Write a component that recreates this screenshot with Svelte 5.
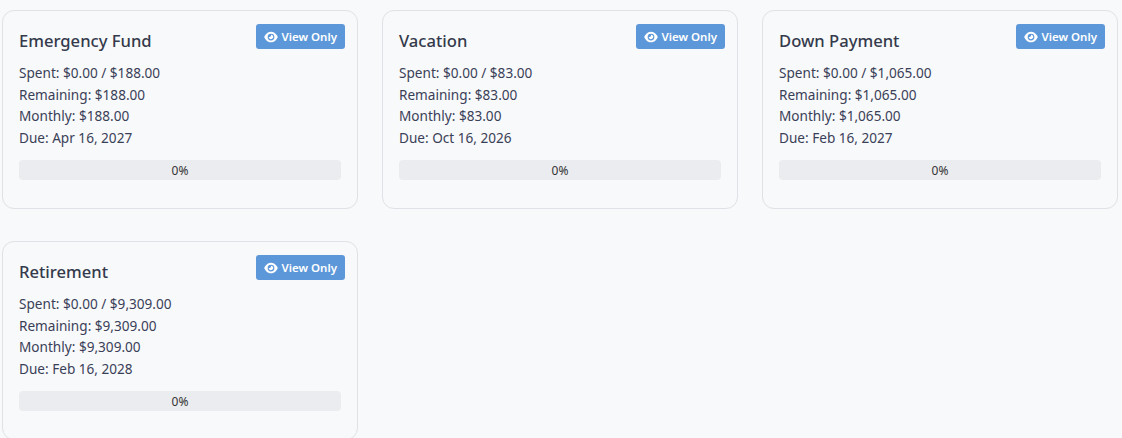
<script>
	const goals = [
		{ name: 'Emergency Fund', spent: '$0.00', total: '$188.00', remaining: '$188.00', monthly: '$188.00', due: 'Apr 16, 2027' },
		{ name: 'Vacation', spent: '$0.00', total: '$83.00', remaining: '$83.00', monthly: '$83.00', due: 'Oct 16, 2026' },
		{ name: 'Down Payment', spent: '$0.00', total: '$1,065.00', remaining: '$1,065.00', monthly: '$1,065.00', due: 'Feb 16, 2027' },
		{ name: 'Retirement', spent: '$0.00', total: '$9,309.00', remaining: '$9,309.00', monthly: '$9,309.00', due: 'Feb 16, 2028' }
	];
</script>

<div class="page">
	<div class="grid">
		{#each goals as goal}
			<div class="card">
				<div class="card__head">
					<h5>{goal.name}</h5>
					<span class="badge">
						<svg width="14" height="12" viewBox="0 0 576 512" aria-hidden="true">
							<path fill="currentColor" d="M288 32c-81 0-146 37-193 81C48 157 17 209 2 245c-3 8-3 17 0 25 15 36 46 88 93 132 47 44 112 78 193 78s146-34 193-78c47-44 78-96 93-132 3-8 3-17 0-25-15-36-46-88-93-132C434 69 369 32 288 32zM144 256a144 144 0 1 1 288 0 144 144 0 1 1-288 0zm144-64c0 35-29 64-64 64-7 0-14-1-20-3-6-2-12 2-12 8 0 5 1 11 3 17 14 51 67 82 118 68s82-67 68-118c-11-42-48-70-89-72-6 0-9 6-7 11 2 8 3 17 3 25z" />
						</svg>
						View Only
					</span>
				</div>
				<p>Spent: {goal.spent} / {goal.total}</p>
				<p>Remaining: {goal.remaining}</p>
				<p>Monthly: {goal.monthly}</p>
				<p>Due: {goal.due}</p>
				<div class="progress">0%</div>
			</div>
		{/each}
	</div>
</div>

<style>
	:global(body) {
		margin: 0;
		background: #f8f9fa;
	}

	.page {
		height: 438px;
		overflow: hidden;
		padding: 10px 4px 0 2px;
		box-sizing: border-box;
		font-family: 'Noto Sans', 'Open Sans', sans-serif;
		color: #3a3f58;
	}

	.grid {
		display: grid;
		grid-template-columns: repeat(3, 356px);
		column-gap: 24px;
		row-gap: 32px;
	}

	.card {
		box-sizing: border-box;
		height: 199px;
		padding: 16px;
		border: 1px solid #dee2e6;
		border-radius: 12px;
		position: relative;
	}

	.card__head {
		height: 33px;
		margin-bottom: 2px;
	}

	h5 {
		margin: 0;
		font-size: 16.6px;
		line-height: 27px;
		font-weight: 500;
		color: #343a4c;
	}

	.badge {
		position: absolute;
		top: 13px;
		right: 12px;
		height: 25px;
		padding: 0 8px;
		display: inline-flex;
		align-items: center;
		gap: 4px;
		border-radius: 3px;
		background: #5c97d9;
		color: #fff;
		font-size: 11.5px;
		font-weight: 600;
	}

	p {
		margin: 0;
		font-size: 13.6px;
		line-height: 21.6px;
	}

	.progress {
		margin-top: 11.6px;
		height: 20px;
		border-radius: 4px;
		background: #ebecef;
		color: #333;
		font-size: 12px;
		line-height: 21px;
		text-align: center;
	}
</style>
